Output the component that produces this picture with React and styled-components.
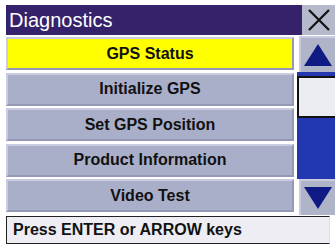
import styled, { createGlobalStyle } from 'styled-components';

const GlobalStyle = createGlobalStyle`
  html, body {
    margin: 0;
    padding: 0;
    background: #ffffff;
  }
  body {
    font-family: "Liberation Sans", Arial, sans-serif;
  }
`;

const Screen = styled.div`
  width: 335px;
  height: 248px;
  box-sizing: border-box;
  padding: 5px 0 0 6px;
  display: flex;
  flex-direction: column;
  overflow: hidden;
  background: #ffffff;
`;

const TitleBar = styled.div`
  display: flex;
  height: 30px;
`;

const Title = styled.div`
  flex: 1;
  background: #36226a;
  color: #ffffff;
  font-size: 20px;
  line-height: 30px;
  padding-left: 3px;
`;

const CloseButton = styled.div`
  width: 33px;
  background: #b6b9cb;
  display: flex;
  align-items: center;
  justify-content: center;
`;

const Body = styled.div`
  display: flex;
  margin-top: 1px;
`;

const List = styled.div`
  width: 288px;
  display: flex;
  flex-direction: column;
  gap: 2.5px;
  padding-top: 1px;
`;

const Row = styled.div`
  height: 33px;
  box-sizing: border-box;
  border-top: 2px solid #c9cce0;
  border-left: 2px solid #c9cce0;
  border-right: 2px solid #9398b4;
  border-bottom: 2px solid #9398b4;
  background: ${p => (p.$active ? '#ffff00' : '#a9aec9')};
  display: flex;
  align-items: center;
  justify-content: center;
  font-size: 16px;
  font-weight: bold;
  color: #111111;
`;

const ScrollBar = styled.div`
  margin-left: 3px;
  width: 38px;
  display: flex;
  flex-direction: column;
`;

const ArrowButton = styled.div`
  height: 36px;
  box-sizing: border-box;
  margin-left: 2px;
  background: #b0b4c9;
  border-top: 2px solid #c9cce0;
  border-left: 2px solid #c9cce0;
  display: flex;
  align-items: center;
  justify-content: center;
`;

const Track = styled.div`
  background: #2337b1;
  display: flex;
  flex-direction: column;
  height: 107px;
`;

const Thumb = styled.div`
  height: 42px;
  box-sizing: border-box;
  margin-top: 4px;
  background: #ececf3;
  border: 2px solid #111111;
  border-right: none;
`;

const StatusBar = styled.div`
  margin-top: 1px;
  width: 324px;
  height: 28px;
  box-sizing: border-box;
  border: 1px solid #222222;
  border-right-color: #dddde6;
  background: #ededf3;
  font-size: 16px;
  font-weight: bold;
  color: #111111;
  line-height: 26px;
  padding-left: 6px;
`;

const items = [
  'GPS Status',
  'Initialize GPS',
  'Set GPS Position',
  'Product Information',
  'Video Test',
];

export default function App() {
  return (
    <>
      <GlobalStyle />
      <Screen>
        <TitleBar>
          <Title>Diagnostics</Title>
          <CloseButton>
            <svg width="24" height="24" viewBox="0 0 24 24">
              <path d="M2 2 L22 22 M22 2 L2 22" stroke="#111" strokeWidth="2.2" />
            </svg>
          </CloseButton>
        </TitleBar>
        <Body>
          <List>
            {items.map((label, i) => (
              <Row key={label} $active={i === 0}>{label}</Row>
            ))}
          </List>
          <ScrollBar>
            <ArrowButton>
              <svg width="30" height="24" viewBox="0 0 30 24">
                <polygon points="15,1 29,23 1,23" fill="#101a84" />
              </svg>
            </ArrowButton>
            <Track>
              <Thumb />
            </Track>
            <ArrowButton>
              <svg width="30" height="24" viewBox="0 0 30 24">
                <polygon points="1,1 29,1 15,23" fill="#101a84" />
              </svg>
            </ArrowButton>
          </ScrollBar>
        </Body>
        <StatusBar>Press ENTER or ARROW keys</StatusBar>
      </Screen>
    </>
  );
}
